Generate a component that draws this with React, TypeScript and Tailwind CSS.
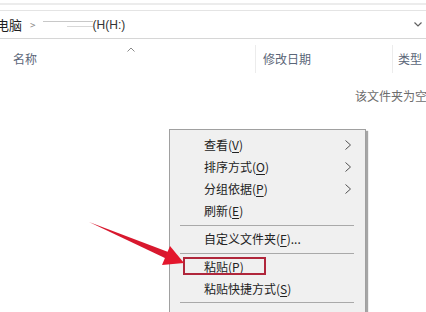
import React from 'react';

const font = { fontFamily: '"Noto Sans CJK SC", "Noto Sans", sans-serif' };

function Chevron() {
  return (
    <svg width="6" height="10" viewBox="0 0 6 10" className="absolute right-[14px] top-1/2 -translate-y-1/2">
      <polyline points="0.5,0.5 5.5,5 0.5,9.5" fill="none" stroke="#505050" strokeWidth="1" />
    </svg>
  );
}

function Item({ label, sub, boxed }: { label: React.ReactNode; sub?: boolean; boxed?: boolean }) {
  return (
    <div className="relative h-[22px] flex items-center pl-[34px] text-[12px] text-[#222]">
      <span>{label}</span>
      {sub && <Chevron />}
      {boxed && (
        <div className="absolute left-[13px] top-[1px] w-[83px] h-[18px] border-2 border-[#b0263b]" />
      )}
    </div>
  );
}

function Sep({ tall }: { tall?: boolean }) {
  return (
    <div className={tall ? 'h-[9px] flex items-start pt-[2px] ml-[10px] mr-[11px]' : 'h-[6px] flex items-center ml-[10px] mr-[11px]'}>
      <div className="h-px w-full bg-[#a9a9a9]" />
    </div>
  );
}

function Key({ k }: { k: string }) {
  return <span className="underline underline-offset-2">{k}</span>;
}

export default function App() {
  return (
    <div className="relative w-[426px] h-[312px] overflow-hidden bg-white" style={font}>
      <div className="h-[3px]" />
      <div className="h-[2px] bg-[#ececec]" />
      <div className="h-[5px]" />
      <div className="h-px bg-[#e4e4e4]" />

      {/* address bar */}
      <div className="h-[28px] flex items-center border-b border-[#d6d6d6] text-[13px] text-[#1e1e1e]">
        <span className="-ml-[4px]">电脑</span>
        <span className="ml-[8px] text-[10px] text-[#888]">&gt;</span>
        <div className="ml-[7px] flex flex-col gap-[4px] w-[50px] -mt-[2px]">
          <div className="h-px bg-[#c8c8c8]" />
          <div className="h-px ml-[24px] bg-[#d8d8d8]" />
        </div>
        <span className="text-[12px] text-[#333]" style={{ fontFamily: '"Liberation Sans", sans-serif' }}>(H(H:)</span>
        <svg width="8" height="5" viewBox="0 0 8 5" className="ml-auto mr-[4px]">
          <polyline points="0.5,0.5 4,4 7.5,0.5" fill="none" stroke="#606060" strokeWidth="1.2" />
        </svg>
      </div>

      {/* column headers */}
      <div className="h-[34px] pt-[6px] flex text-[12px] text-[#5b6678]">
        <div className="relative w-[255px] flex items-center pl-[13px]">
          名称
          <svg width="8" height="5" viewBox="0 0 8 5" className="absolute left-[127px] top-[2px]">
            <polyline points="0.5,4.5 4,1 7.5,4.5" fill="none" stroke="#8a8a8a" strokeWidth="1" />
          </svg>
        </div>
        <div className="w-[137px] flex items-center pl-[7px] border-l border-[#ececec]">修改日期</div>
        <div className="flex-1 flex items-center pl-[5px] border-l border-[#ececec] whitespace-nowrap">类型</div>
      </div>

      <div className="mt-[14px] pl-[355px] text-[12px] text-[#6d6d6d] whitespace-nowrap">该文件夹为空。</div>

      {/* context menu */}
      <div className="absolute left-[169px] top-[129px] w-[197px] h-[200px] bg-[#f0f0f0] border border-[#a0a0a0] pt-[4px] shadow-[2px_2px_1px_rgba(0,0,0,0.35)]">
        <Item label={<>查看(<Key k="V" />)</>} sub />
        <Item label={<>排序方式(<Key k="O" />)</>} sub />
        <Item label={<>分组依据(<Key k="P" />)</>} sub />
        <Item label={<>刷新(<Key k="E" />)</>} />
        <Sep />
        <Item label={<>自定义文件夹(<Key k="F" />)...</>} />
        <Sep />
        <Item label={<>粘贴(<Key k="P" />)</>} boxed />
        <Item label={<>粘贴快捷方式(<Key k="S" />)</>} />
        <Sep tall />
        <Item label={<>授予访问权限(<Key k="G" />)</>} sub />
      </div>

      {/* red arrow annotation */}
      <svg width="426" height="312" className="absolute inset-0 pointer-events-none">
        <polygon points="89,222 169.5,252.5 167,259" fill="#d8182e" />
        <polygon points="184,263 170,246 162,265" fill="#e3172d" />
      </svg>
    </div>
  );
}
